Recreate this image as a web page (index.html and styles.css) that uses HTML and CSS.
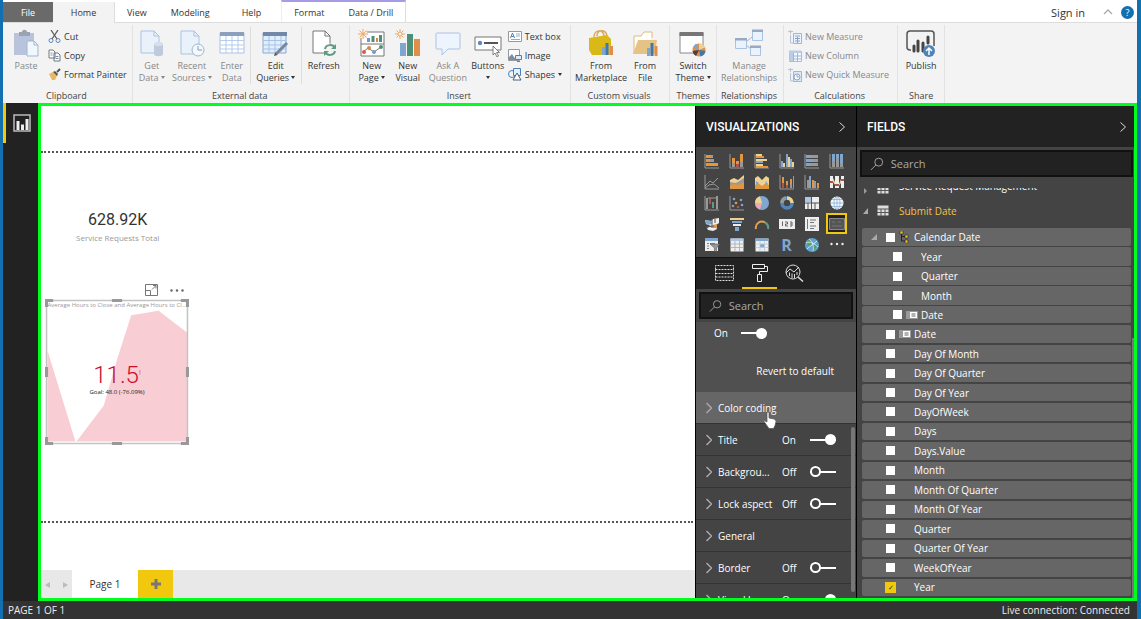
FILE: index.html
```html
<!DOCTYPE html>
<html lang="en">
<head>
    <meta charset="UTF-8">
    <meta name="viewport" content="width=device-width, initial-scale=1">
    <title>Service Requests - Power BI Desktop</title>
    <link rel="stylesheet" href="styles.css">
</head>
<body>
    <header class="tabs">
        <button class="tab tab-file">File</button>
        <button class="tab tab-home">Home</button>
        <button class="tab">View</button>
        <button class="tab">Modeling</button>
        <button class="tab tab-help">Help</button>
        <div class="tab-context">
            <button class="tab">Format</button>
            <button class="tab">Data / Drill</button>
        </div>
        <div class="account">
            <a href="#" class="signin">Sign in</a>
            <svg width="10" height="6" viewBox="0 0 10 6"><path d="M1 5L5 1L9 5" fill="none" stroke="#aaa" stroke-width="1.3"/></svg>
            <button class="help">?</button>
        </div>
    </header>

    <div class="ribbon">
        <section class="group">
            <div class="tools">
                <button class="big medium off">
                    <svg width="26" height="28" viewBox="0 0 26 28"><path d="M1 4h20v22H1z" fill="#b9c4dc"/><path d="M6 7V3h3c0-3 5-3 5 0h3v4z" fill="#9aa3b3"/><path d="M14 12h7l4 4v11H14z" fill="#f1f7fd" stroke="#9db7d4"/><path d="M21 12v4h4" fill="none" stroke="#9db7d4"/></svg>
                    <span>Paste</span>
                </button>
                <div class="smalls">
                    <button class="small">
                        <svg width="13" height="13" viewBox="0 0 13 13"><path d="M3 0L9 9M10 0L4 9" stroke="#555" stroke-width="1.2"/><circle cx="3" cy="10.500" r="2" fill="none" stroke="#5a86b8"/><circle cx="10" cy="10.500" r="2" fill="none" stroke="#5a86b8"/></svg>
                        Cut
                    </button>
                    <button class="small">
                        <svg width="13" height="13" viewBox="0 0 13 13"><path d="M1 1h4l2 2v6H1zM6 4h4l2 2v6H6z" fill="#fff" stroke="#777"/><path d="M2.500 4h2M2.500 6h2M7.500 7.500h3M7.500 9.500h3" stroke="#6a93bf"/></svg>
                        Copy
                    </button>
                    <button class="small">
                        <svg width="13" height="13" viewBox="0 0 13 13"><path d="M1 6l4-2 4 4-2 4-3 0z" fill="#eab765"/><path d="M5 4l2-1 3 3-1 2z" fill="#555"/><path d="M9 4l3-3" stroke="#555" stroke-width="2"/></svg>
                        Format Painter
                    </button>
                </div>
            </div>
            <h2>Clipboard</h2>
        </section>

        <section class="group">
            <div class="tools">
                <button class="big narrow off">
                    <svg width="24" height="28" viewBox="0 0 24 28"><path d="M1 2h13l5 5v17H1z" fill="#e9f1fb" stroke="#a9c3e4"/><path d="M14 2v5h5" fill="none" stroke="#a9c3e4"/><path d="M14 15v10c0 3 9 3 9 0V15z" fill="#bfcadd"/><ellipse cx="18.500" cy="15" rx="4.500" ry="2" fill="#d6deeb"/></svg>
                    <span>Get<br>Data <i class="caret"></i></span>
                </button>
                <button class="big medium off">
                    <svg width="26" height="28" viewBox="0 0 26 28"><path d="M2 2h13l5 5v18H2z" fill="#e9f1fb" stroke="#a9c3e4"/><path d="M15 2v5h5" fill="none" stroke="#a9c3e4"/><circle cx="19" cy="21" r="6" fill="#f4f8fd" stroke="#9fb4d0"/><path d="M19 17v4h4" fill="none" stroke="#8899b4"/></svg>
                    <span>Recent<br>Sources <i class="caret"></i></span>
                </button>
                <button class="big narrow off">
                    <svg width="26" height="28" viewBox="0 0 26 28"><path d="M1 4h24v20H1z" fill="#fff" stroke="#a9c3e4"/><path d="M1 3h24v4H1z" fill="#8d9fbe"/><path d="M1 11.500h24M1 16h24M1 20h24M7 7v17M13 7v17M19 7v17" stroke="#b5cdec"/></svg>
                    <span>Enter<br>Data</span>
                </button>
                <button class="big wide lined">
                    <svg width="28" height="28" viewBox="0 0 28 28"><path d="M1 4h23v20H1z" fill="#e3eefb" stroke="#8aa9cd"/><path d="M1 3h24v4H1z" fill="#7388a8"/><path d="M1 11.500h23M1 16h23M1 20h23M7 7v17M13 7v17M19 7v17" stroke="#a5c3e6"/><path d="M25 14L14 25" stroke="#76879f" stroke-width="3"/><path d="M12 27l1-3.500 2.500 2.500z" fill="#555"/></svg>
                    <span>Edit<br>Queries <i class="caret"></i></span>
                </button>
                <button class="big medium">
                    <svg width="26" height="28" viewBox="0 0 26 28"><path d="M2 2h12l5 5v17H2z" fill="#fff" stroke="#777"/><path d="M14 2v5h5" fill="none" stroke="#777"/><circle cx="19" cy="21" r="6.500" fill="#f3f3f3"/><path d="M14 20c1-5 8-5 10-1M24 22c-1 5-8 5-10 1" fill="none" stroke="#5d9c83" stroke-width="2"/><path d="M25 15v5h-5zM13 27v-5h5z" fill="#5d9c83"/></svg>
                    <span>Refresh</span>
                </button>
            </div>
            <h2>External data</h2>
        </section>

        <section class="group spaced">
            <div class="tools">
                <button class="big narrow">
                    <svg width="28" height="28" viewBox="0 0 28 28"><path d="M3 3h23v24H3zM3 15h23" fill="#fff" stroke="#777"/><path d="M9 9h3v4H9z" fill="#6f9bc4"/><path d="M13.500 7h3v6h-3z" fill="#4d9078"/><path d="M18 9h2v4h-2z" fill="#d98743"/><path d="M21 6h3v7h-3z" fill="#4d9078"/><path d="M5 23l5-4 6 4 7-5" fill="none" stroke="#777"/><circle cx="6" cy="23" r="2" fill="#d65d45"/><circle cx="11" cy="19" r="2" fill="#d98743"/><circle cx="16" cy="23" r="2" fill="#6f9bc4"/><circle cx="23" cy="18" r="2" fill="#4d9078"/><circle cx="5" cy="5" r="4.500" fill="#f3f3f3"/><path d="M5 0v10M0 5h10M1.500 1.500l7 7M8.500 1.500l-7 7" stroke="#f0a963"/></svg>
                    <span>New<br>Page <i class="caret"></i></span>
                </button>
                <button class="big narrow">
                    <svg width="26" height="28" viewBox="0 0 26 28"><path d="M5 14h6v13H5z" fill="#7ea6cf"/><path d="M12 5h6v22h-6z" fill="#4d9078"/><path d="M19 10h6v17h-6z" fill="#e08e48"/><path d="M5 0v10M0 5h10M1.500 1.500l7 7M8.500 1.500l-7 7" stroke="#f0a963"/><circle cx="5" cy="5" r="2" fill="#f3f3f3" stroke="#f0a963"/></svg>
                    <span>New<br>Visual</span>
                </button>
                <button class="big medium off">
                    <svg width="26" height="28" viewBox="0 0 26 28"><path d="M2 4h22q1 0 1 1v14q0 1-1 1H13l-6 6v-6H2q-1 0-1-1V5q0-1 1-1z" fill="#edf4fd" stroke="#a9c3e4"/></svg>
                    <span>Ask A<br>Question</span>
                </button>
                <button class="big narrow">
                    <svg width="28" height="28" viewBox="0 0 28 28"><path d="M1 8h26v13H1z" fill="#fff" stroke="#777"/><circle cx="6" cy="14" r="2.200" fill="#5a8bc0"/><path d="M10 14h14" stroke="#555" stroke-width="2"/><path d="M19 17v9l2-2 2 4 1.500-1-2-3.500h3z" fill="#fff" stroke="#666" stroke-width=".8"/></svg>
                    <span>Buttons<br><i class="caret"></i></span>
                </button>
                <div class="smalls">
                    <button class="small">
                        <svg width="14" height="13" viewBox="0 0 14 13"><path d="M.5 1.500h13v10H.5z" fill="#fff" stroke="#999"/><path d="M2.500 8l2-5 2 5M3.300 6.500h2.500" fill="none" stroke="#4a80bd"/><path d="M8 4h4M8 6h4M3 9.500h9" stroke="#89afd8"/></svg>
                        Text box
                    </button>
                    <button class="small">
                        <svg width="14" height="13" viewBox="0 0 14 13"><path d="M.5.5h11v11H.5z" fill="#fff" stroke="#999"/><path d="M1 11V8l3-3 4 6z" fill="#7c8fa8"/><path d="M7.500 6.500h6v4h-6zM9 12.500h3" fill="#dcecff" stroke="#4a80bd"/></svg>
                        Image
                    </button>
                    <button class="small">
                        <svg width="14" height="13" viewBox="0 0 14 13"><circle cx="4" cy="6" r="3.500" fill="none" stroke="#4a80bd"/><path d="M5.500.5h7v7h-7z" fill="#e5f0fc" stroke="#4a80bd"/><path d="M9 5l4 7H5z" fill="#fff" stroke="#47617f"/></svg>
                        Shapes <i class="caret"></i>
                    </button>
                </div>
            </div>
            <h2>Insert</h2>
        </section>

        <section class="group spaced">
            <div class="tools">
                <button class="big wide">
                    <svg width="26" height="28" viewBox="0 0 26 28"><path d="M6 8c0-8 10-8 10-1M9 7c0-7 9-7 10 0" fill="none" stroke="#d9a95a" stroke-width="1.500"/><path d="M1 9l18-3 4 4v16H4l-3-5z" fill="#d9b818"/><path d="M14 18h3v8h-3z" fill="#7ea6cf"/><path d="M17.500 14h3v12h-3z" fill="#3f78ad"/><path d="M22 17h3v9h-3z" fill="#e08e48"/></svg>
                    <span>From<br>Marketplace</span>
                </button>
                <button class="big narrow">
                    <svg width="26" height="28" viewBox="0 0 26 28"><path d="M2 24V7h7l3-4h8v6" fill="#fff" stroke="#e0b978"/><path d="M1 25l5-14h19l-2 14z" fill="#e5c385"/><path d="M15 19h3v8h-3z" fill="#7ea6cf"/><path d="M18.500 14h3v13h-3z" fill="#3f78ad"/><path d="M22.500 17h3v10h-3z" fill="#e08e48"/></svg>
                    <span>From<br>File</span>
                </button>
            </div>
            <h2>Custom visuals</h2>
        </section>

        <section class="group tight">
            <div class="tools">
                <button class="big medium">
                    <svg width="28" height="28" viewBox="0 0 28 28"><path d="M1 4h23v20H1z" fill="#fff" stroke="#888"/><path d="M.5 3h24v4H.5z" fill="#777"/><circle cx="20" cy="21" r="6.500" fill="#e08e48"/><path d="M20 21v-6.500a6.500 6.500 0 0 1 6 4z" fill="#eed292"/><path d="M20 21l6.500 1a6.500 6.500 0 0 1-5 5.500z" fill="#3f78ad"/><path d="M20 21l-3 6a6.500 6.500 0 0 1-3.500-5z" fill="#444"/><path d="M20 21l-6-3 3-3.500z" fill="#7ea6cf"/></svg>
                    <span>Switch<br>Theme <i class="caret"></i></span>
                </button>
            </div>
            <h2>Themes</h2>
        </section>

        <section class="group">
            <div class="tools">
                <button class="big full off">
                    <svg width="28" height="28" viewBox="0 0 28 28"><path d="M11 13l6-5M11 16l5 4" stroke="#aab4c4"/><path d="M.5 9.500h11v10H.5zM17.500 1.500h10v10h-10zM15.500 17.500h10v9h-10z" fill="#e9f2fd" stroke="#a9c3e4"/><path d="M0 9h12v2.500H0zM17 .5h11V3H17zM15 16.500h11V19H15z" fill="#98a9c4"/></svg>
                    <span>Manage<br>Relationships</span>
                </button>
            </div>
            <h2>Relationships</h2>
        </section>

        <section class="group spaced">
            <div class="tools">
                <div class="smalls">
                    <button class="small off">
                        <svg width="14" height="14" viewBox="0 0 14 14"><path d="M0 1.500h5M2.500 0v4M2.500 5v8h3" fill="none" stroke="#b6c4d8"/><path d="M5.500 3.500h8v10h-8z" fill="#e9f2fd" stroke="#9db7d8"/><path d="M7 6h5M7 8.500h5M7 11h5M9.500 7v6" stroke="#8ba4c6"/></svg>
                        New Measure
                    </button>
                    <button class="small off">
                        <svg width="14" height="14" viewBox="0 0 14 14"><path d="M1.500 2.500h12v10h-12z" fill="#f5f9ff" stroke="#a4bddc"/><path d="M1 1.500h12V4H1zM1.500 4h4v8h-4z" fill="#b9cde6"/><path d="M5.500 4v8M9.500 4v8M5 7h8M5 10h8" stroke="#9db7d8"/></svg>
                        New Column
                    </button>
                    <button class="small off">
                        <svg width="14" height="14" viewBox="0 0 14 14"><path d="M0 1.500h5M2.500 0v4M2.500 5v8h3" fill="none" stroke="#b6c4d8"/><path d="M5.500 3.500h8v10h-8z" fill="#dce8f7" stroke="#9db7d8"/><circle cx="9" cy="9" r="3" fill="#fff" stroke="#8ba4c6"/><path d="M9 7v2h2" fill="none" stroke="#8ba4c6"/></svg>
                        New Quick Measure
                    </button>
                </div>
            </div>
            <h2>Calculations</h2>
        </section>

        <section class="group tight">
            <div class="tools">
                <button class="big medium">
                    <svg width="30" height="28" viewBox="0 0 30 28"><path d="M5 21H4q-3 0-3-3V5q0-3 3-3h21q3 0 3 3v12" fill="none" stroke="#555" stroke-width="1.500"/><path d="M8 17v5M12 12v10M17 14v8M22 8v6" stroke="#444" stroke-width="3" stroke-linecap="round"/><circle cx="23" cy="22" r="6" fill="#4d83b6"/><path d="M23 26v-7M20 22l3-3 3 3" fill="none" stroke="#fff" stroke-width="1.500"/></svg>
                    <span>Publish</span>
                </button>
            </div>
            <h2>Share</h2>
        </section>
    </div>

    <main class="workspace">
        <nav class="rail">
            <button class="rail-item" aria-label="Report">
                <svg width="18" height="18" viewBox="0 0 18 18"><path d="M1 1h16v16H1z" fill="none" stroke="#bbb" stroke-width="1.500"/><path d="M3.500 7h3v9h-3zM8 10.500h3V16H8zM12.500 5h3v11h-3z" fill="#eee"/></svg>
            </button>
        </nav>

        <div class="frame">
            <div class="report">
                <div class="canvas">
                    <div class="page"></div>
                    <div class="card">
                        <strong>628.92K</strong>
                        <span>Service Requests Total</span>
                    </div>
                    <div class="kpi-tools">
                        <svg width="13" height="12" viewBox="0 0 13 12"><path d="M.5.500h12v11H.5zM.5 6.500h5v5M7 5.500l4-4M8 1.500h3v3" fill="none" stroke="#777"/></svg>
                        <svg width="14" height="3" viewBox="0 0 14 3"><circle cx="1.500" cy="1.500" r="1.200" fill="#666"/><circle cx="7" cy="1.500" r="1.200" fill="#666"/><circle cx="12.500" cy="1.500" r="1.200" fill="#666"/></svg>
                    </div>
                    <div class="kpi">
                        <svg class="kpi-area" viewBox="0 0 142 144"><path d="M2.500 51L30 140.500H2.500zM31 140.500L58 105L71 60L85 16L112 11.500L140 33v107.500z" fill="#f8cdd3"/></svg>
                        <p class="kpi-title">Average Hours to Close and Average Hours to Cl...</p>
                        <p class="kpi-value">11.5<sup>!</sup></p>
                        <p class="kpi-goal">Goal: 48.0 (-76.09%)</p>
                        <!-- resize handles -->
                        <svg class="kpi-handles" viewBox="0 0 142 144"><path d="M1.500 1.500h139v141H1.500z" fill="none" stroke="#c4c4c4" stroke-width="1.500"/><path d="M0 8V0h8v3H3v5zM134 0h8v8h-3V3h-5zM142 136v8h-8v-3h5v-5zM8 144H0v-8h3v5h5zM66 0h10v3H66zM66 141h10v3H66zM0 67h3v10H0zM139 67h3v10h-3z" fill="#999"/></svg>
                    </div>
                </div>
                <div class="pages">
                    <div class="pager">
                        <button aria-label="Previous page"><svg width="5" height="6" viewBox="0 0 5 6"><path d="M5 0v6L0 3z" fill="#bbb"/></svg></button>
                        <button aria-label="Next page"><svg width="5" height="6" viewBox="0 0 5 6"><path d="M0 0v6l5-3z" fill="#bbb"/></svg></button>
                    </div>
                    <button class="page-tab">Page 1</button>
                    <button class="page-add" aria-label="Add page"><svg width="10" height="10" viewBox="0 0 10 10"><path d="M3.500 0h3v3.500H10v3H6.500V10h-3V6.500H0v-3h3.500z" fill="#777"/></svg></button>
                </div>
            </div>

            <aside class="pane viz">
                <div class="pane-head">
                    <h1>VISUALIZATIONS</h1>
                    <svg width="6" height="10" viewBox="0 0 6 10"><path d="M.5.500L5.500 5L.5 9.500" fill="none" stroke="#ddd"/></svg>
                </div>
                <div class="gallery">
                    <button aria-label="Stacked bar"><svg viewBox="0 0 16 16"><path d="M1 1v14h14" class="axis"/><path d="M2 2h5v3H2zM2 6h4v3H2zM2 10h6v3H2z" class="o"/><path d="M7 2h2v3H7zM6 6h4v3H6z" class="g"/><path d="M8 10h6v3H8z" class="o"/></svg></button>
                    <button aria-label="Stacked column"><svg viewBox="0 0 16 16"><path d="M1 1v14h14" class="axis"/><path d="M3 5h3v5H3zM7 8h3v3H7zM11 1h3v8h-3z" class="o"/><path d="M3 10h3v4H3zM11 9h3v5h-3z" class="g"/><path d="M7 11h3v3H7z" class="r"/></svg></button>
                    <button aria-label="Clustered bar"><svg viewBox="0 0 16 16"><path d="M1 1v14h14" class="axis"/><path d="M2 1h6v2H2zM2 6h11v2H2zM2 11h7v2H2z" class="y"/><path d="M2 3h8v2H2zM2 13h12v2H2z" class="o"/><path d="M2 8h7v2H2z" class="b"/></svg></button>
                    <button aria-label="Clustered column"><svg viewBox="0 0 16 16"><path d="M1 1v14h14" class="axis"/><path d="M2 8h2v6H2zM7 1h2v13H7zM11 6h2v8h-2z" class="b"/><path d="M4 10h2v4H4zM9 4h2v10H9zM13 9h2v5h-2z" class="y"/></svg></button>
                    <button aria-label="100% stacked bar"><svg viewBox="0 0 16 16"><path d="M1 1v14h14" class="axis"/><path d="M2 2h5v3H2zM2 6h7v3H2zM2 10h4v3H2z" class="b"/><path d="M7 2h7v3H7zM9 6h5v3H9zM6 10h8v3H6z" class="g"/></svg></button>
                    <button aria-label="100% stacked column"><svg viewBox="0 0 16 16"><path d="M1 1v14h14" class="axis"/><path d="M3 1h3v7H3zM7 1h3v4H7zM11 1h3v9h-3z" class="b"/><path d="M3 8h3v6H3zM7 5h3v9H7zM11 10h3v4h-3z" class="g"/></svg></button>

                    <button aria-label="Line"><svg viewBox="0 0 16 16"><path d="M1 1v14h14M1 12l5-5 3 2 5-5M1 14l4-3 5-1 5 4" class="axis"/></svg></button>
                    <button aria-label="Area"><svg viewBox="0 0 16 16"><path d="M1 15V6l4-2 4 2 6-5v14z" class="y"/><path d="M1 15V8l5 1 3-1 6-4v11z" class="g"/><path d="M1 15v-4l5-1 4 1 5-3v7z" class="o"/></svg></button>
                    <button aria-label="Stacked area"><svg viewBox="0 0 16 16"><path d="M1 15V4l3-2 4 4 4-4 3 2v11z" class="y"/><path d="M1 15v-4l3-2 4 3 4-3 3 2v4z" class="o"/><path d="M2 7l3 2-3 2zM12 7l2 3-3 1z" class="b"/></svg></button>
                    <button aria-label="Line and stacked column"><svg viewBox="0 0 16 16"><path d="M1 1v14h14" class="axis"/><path d="M3 3h2v6H3zM7 7h2v5H7zM11 5h2v5h-2z" class="o"/><path d="M3 9h2v5H3zM7 11h2v3H7z" class="r"/><path d="M11 10h2v4h-2zM14 2h1v12h-1z" class="g"/></svg></button>
                    <button aria-label="Line and clustered column"><svg viewBox="0 0 16 16"><path d="M1 1v14h14" class="axis"/><path d="M3 6h2v8H3zM10 7h2v7h-2z" class="g"/><path d="M5 2h2v12H5z" class="b"/><path d="M8 6h2v8H8zM13 9h2v5h-2z" class="o"/></svg></button>
                    <button aria-label="Ribbon"><svg viewBox="0 0 16 16"><path d="M1 2h3v12H1zM6 2h4v12H6zM12 2h3v12h-3z" class="w"/><path d="M4 4l2 4v3L4 8zM10 10l2-5v4l-2 3z" class="y"/><path d="M1 7h3v2H1zM6 10h4v2H6zM12 5h3v2h-3z" class="r"/></svg></button>

                    <button aria-label="Waterfall"><svg viewBox="0 0 16 16"><path d="M1 1v14h14" class="axis"/><path d="M2 3h2v11H2zM12 1h2v13h-2z" class="g"/><path d="M5 3h2v6H5z" class="r"/><path d="M8 7h2v6H8z" class="t"/><path d="M4 3h8" class="axis"/></svg></button>
                    <button aria-label="Scatter"><svg viewBox="0 0 16 16"><path d="M1 1v14h14" class="axis"/><circle cx="5" cy="4" r="1.300" class="b"/><circle cx="12" cy="5" r="1.300" class="b"/><circle cx="7" cy="8" r="1.300" class="o"/><circle cx="4" cy="11" r="1.300" class="g"/><circle cx="9" cy="12" r="1.300" class="r"/><circle cx="13" cy="10" r="1.300" class="b"/></svg></button>
                    <button aria-label="Pie"><svg viewBox="0 0 16 16"><circle cx="8" cy="8" r="7" class="b"/><path d="M8 8L6 1.200A7 7 0 0 0 1 8z" class="y"/><path d="M8 8H1a7 7 0 0 0 5 6.500z" fill="#e9aab0"/></svg></button>
                    <button aria-label="Donut"><svg viewBox="0 0 16 16"><circle cx="8" cy="8" r="5" fill="none" stroke="#4e87bd" stroke-width="3.500"/><path d="M8 3a5 5 0 0 1 5 5" fill="none" stroke="#eed292" stroke-width="3.500"/><path d="M3 8a5 5 0 0 1 4-5" fill="none" stroke="#999" stroke-width="3.500"/></svg></button>
                    <button aria-label="Treemap"><svg viewBox="0 0 16 16"><path d="M1 2h14v12H1z" class="w"/><path d="M1 2h6v5H1z" fill="#a9c7e6"/><path d="M7.500 2v12M1 8h14M11 8v6M4 8v6" stroke="#555"/></svg></button>
                    <button aria-label="Map"><svg viewBox="0 0 16 16"><circle cx="8" cy="8" r="6.500" fill="#f2f8fd"/><path d="M8 1.500v13M1.500 8h13M3 4.500h10M3 11.500h10" stroke="#7ea6cf" stroke-width=".7"/><ellipse cx="8" cy="8" rx="3" ry="6.500" fill="none" stroke="#7ea6cf" stroke-width=".7"/></svg></button>

                    <button aria-label="Filled map"><svg viewBox="0 0 16 16"><path d="M1 4l6 1 2-2 6-1v5l-3 2 1 4-4 2-5-1-1-2 4-2-5-2z" class="w"/><path d="M1 4l6 1 1 3-5 1z" class="b"/><path d="M9 9l4-1v4l-4 0z" class="o"/><path d="M8 3v9M11 3v4M2 11l8-1" stroke="#555"/></svg></button>
                    <button aria-label="Funnel"><svg viewBox="0 0 16 16"><path d="M1 2h14v2H1z" class="y"/><path d="M3 5h10v2H3zM6 11h4v4H6z" class="b"/><path d="M4 8h8v2H4z" class="w"/></svg></button>
                    <button aria-label="Gauge"><svg viewBox="0 0 16 16"><path d="M2 13a6 6 0 0 1 9-6.500" fill="none" stroke="#e4a24e" stroke-width="2"/><path d="M11 6.500A6 6 0 0 1 14 13" fill="none" stroke="#5d9c83" stroke-width="2"/></svg></button>
                    <button aria-label="Card"><svg viewBox="0 0 16 16"><path d="M0 3h16v10H0z" class="w"/><path d="M3.500 5.500V10M6 6h2.500v2H6.500v2H9M11 6h2v4h-2M11 8h2" fill="none" stroke="#666"/></svg></button>
                    <button aria-label="Multi-row card"><svg viewBox="0 0 16 16"><path d="M1 1h14v14H1z" class="w"/><path d="M3.500 3v10M6 4h6M6 6.500h4M6 10h6M6 12.500h4" stroke="#777"/></svg></button>
                    <button class="picked" aria-label="KPI"><svg viewBox="0 0 16 16"><path d="M.5 2.500h15v11H.5z" fill="#555" stroke="#888"/><path d="M3 6h3M3 10h10M9 6h3" stroke="#777"/></svg></button>

                    <button aria-label="Slicer"><svg viewBox="0 0 16 16"><path d="M1 1h13v13H1z" class="w"/><path d="M1 1h13v3H1z" class="b"/><path d="M3 6.500h2M3 9h2M3 11.500h2M6 6.500h5" stroke="#888"/><path d="M6 7h10l-3.500 4v4l-2-1v-3z" fill="#999" stroke="#444" stroke-width=".5"/></svg></button>
                    <button aria-label="Table"><svg viewBox="0 0 16 16"><path d="M1.500 1.500h13v13h-13z" class="w"/><path d="M1.500 1.500h13v2.500h-13z" fill="#a9c7e6"/><path d="M1.500 7h13M1.500 10.500h13M6 4v10M10.500 4v10" stroke="#aaa" stroke-width=".8"/></svg></button>
                    <button aria-label="Matrix"><svg viewBox="0 0 16 16"><path d="M1.500 1.500h13v13h-13z" class="w"/><path d="M1.500 1.500h13v2.500h-13zM6 7h4.500v3.500H6z" fill="#7ea6cf"/><path d="M1.500 7h13M1.500 10.500h13M6 4v10M10.500 4v10" stroke="#b8c8da" stroke-width=".8"/></svg></button>
                    <button class="letter" aria-label="R script visual">R</button>
                    <button aria-label="ArcGIS map"><svg viewBox="0 0 16 16"><circle cx="8" cy="8" r="7" fill="#5da3cf"/><path d="M4 3l4 1-1 4-4 1zM9 8l4-1-1 4-3 2z" fill="#5d9c63"/><path d="M2 6c4-2 8 0 12 4M3 12c3-3 8-6 10-8M5 2c4 3 5 8 4 12" fill="none" stroke="#e4f0fb" stroke-width=".8"/></svg></button>
                    <button aria-label="More visuals"><svg viewBox="0 0 16 16"><circle cx="2.500" cy="7" r="1.200" class="w"/><circle cx="8" cy="7" r="1.200" class="w"/><circle cx="13.500" cy="7" r="1.200" class="w"/></svg></button>
                </div>
                <div class="modes">
                    <button aria-label="Fields"><svg width="19" height="17" viewBox="0 0 19 17"><path d="M.5 5.500h18v-4H.5zM.5 5.500v11h18v-11M.5 9.500h18M.5 13h18" fill="none" stroke="#ddd" stroke-dasharray="2 1"/></svg></button>
                    <button class="active" aria-label="Format"><svg width="18" height="18" viewBox="0 0 18 18"><path d="M1.500.500h12v4h-12zM13.500 2.500h3v5h-8v3M6.500 10.500h4v7h-4z" fill="none" stroke="#eee"/></svg></button>
                    <button aria-label="Analytics"><svg width="19" height="18" viewBox="0 0 19 18"><circle cx="8" cy="8" r="7" fill="none" stroke="#ddd"/><path d="M13 13l5 4.500" stroke="#ddd" stroke-width="1.500"/><path d="M1 9l4-4 4 3 5-5M4.500 12V8.500M7 14V9.500M9.500 14v-4M12 11V8" fill="none" stroke="#ddd"/></svg></button>
                </div>
                <label class="search">
                    <svg width="15" height="14" viewBox="0 0 15 14"><circle cx="9.500" cy="5" r="4.300" fill="none" stroke="#aaa"/><path d="M6.500 8L1 13.500" stroke="#aaa"/></svg>
                    <input type="text" placeholder="Search" aria-label="Search properties">
                </label>
                <div class="props">
                    <div class="prop-body">
                        <label class="prop-state">On <input type="checkbox" class="toggle" checked></label>
                        <button class="revert">Revert to default</button>
                    </div>
                    <div class="prop hover">
                        <svg width="6" height="12" viewBox="0 0 6 12"><path d="M.5 1L5.500 6L.5 11" fill="none" stroke="#aaa" stroke-width="1.500"/></svg>
                        <span>Color coding</span>
                        <svg class="pointer" width="14" height="18" viewBox="0 0 14 18"><path d="M4 1.500q1.500-1.500 2 .5v5l5 1q2 .5 2 2.500l-1 4-1.500 3H6l-5-7q0-1.500 3 .5z" fill="#fff" stroke="#555" stroke-width=".7"/></svg>
                    </div>
                    <div class="prop">
                        <svg width="6" height="12" viewBox="0 0 6 12"><path d="M.5 1L5.500 6L.5 11" fill="none" stroke="#aaa" stroke-width="1.500"/></svg>
                        <span>Title</span>
                        <label class="prop-state">On <input type="checkbox" class="toggle" checked></label>
                    </div>
                    <div class="prop">
                        <svg width="6" height="12" viewBox="0 0 6 12"><path d="M.5 1L5.500 6L.5 11" fill="none" stroke="#aaa" stroke-width="1.500"/></svg>
                        <span>Backgrou...</span>
                        <label class="prop-state">Off <input type="checkbox" class="toggle"></label>
                    </div>
                    <div class="prop">
                        <svg width="6" height="12" viewBox="0 0 6 12"><path d="M.5 1L5.500 6L.5 11" fill="none" stroke="#aaa" stroke-width="1.500"/></svg>
                        <span>Lock aspect</span>
                        <label class="prop-state">Off <input type="checkbox" class="toggle"></label>
                    </div>
                    <div class="prop">
                        <svg width="6" height="12" viewBox="0 0 6 12"><path d="M.5 1L5.500 6L.5 11" fill="none" stroke="#aaa" stroke-width="1.500"/></svg>
                        <span>General</span>
                    </div>
                    <div class="prop">
                        <svg width="6" height="12" viewBox="0 0 6 12"><path d="M.5 1L5.500 6L.5 11" fill="none" stroke="#aaa" stroke-width="1.500"/></svg>
                        <span>Border</span>
                        <label class="prop-state">Off <input type="checkbox" class="toggle"></label>
                    </div>
                    <div class="prop">
                        <svg width="6" height="12" viewBox="0 0 6 12"><path d="M.5 1L5.500 6L.5 11" fill="none" stroke="#aaa" stroke-width="1.500"/></svg>
                        <span>Visual he...</span>
                        <label class="prop-state">On <input type="checkbox" class="toggle" checked></label>
                    </div>
                    <div class="scrollbar"></div>
                </div>
            </aside>

            <aside class="pane fields">
                <div class="pane-head">
                    <h1>FIELDS</h1>
                    <svg width="6" height="10" viewBox="0 0 6 10"><path d="M.5.500L5.500 5L.5 9.500" fill="none" stroke="#ddd"/></svg>
                </div>
                <label class="search">
                    <svg width="15" height="14" viewBox="0 0 15 14"><circle cx="9.500" cy="5" r="4.300" fill="none" stroke="#aaa"/><path d="M6.500 8L1 13.500" stroke="#aaa"/></svg>
                    <input type="text" placeholder="Search" aria-label="Search fields">
                </label>
                <div class="table-row scrolled">
                    <svg width="5" height="6" viewBox="0 0 5 6"><path d="M1 0l3 3-3 3z" fill="#999"/></svg>
                    <svg width="12" height="11" viewBox="0 0 12 11"><path d="M.5.500h11v10H.5z" fill="#ddd"/><path d="M0 4h12M0 7.500h12M4 4v7M8 4v7" stroke="#555"/></svg>
                    <span>Service Request Management</span>
                </div>
                <div class="table-row open">
                    <svg width="5" height="6" viewBox="0 0 5 6"><path d="M5 0v6H0z" fill="#aaa"/></svg>
                    <svg width="12" height="11" viewBox="0 0 12 11"><path d="M.5.500h11v10H.5z" fill="#ddd"/><path d="M0 4h12M0 7.500h12M4 4v7M8 4v7" stroke="#555"/></svg>
                    <span>Submit Date</span>
                </div>
                <div class="list">
                    <label class="field joined">
                        <svg class="fold" width="6" height="6" viewBox="0 0 6 6"><path d="M6 0v6H0z" fill="#aaa"/></svg>
                        <input type="checkbox">
                        <svg class="kind" width="13" height="12" viewBox="0 0 13 12"><path d="M3.500 3v7h5M3.500 5.500h5" fill="none" stroke="#222"/><path d="M2 0h3v3H2zM7 4h3v3H7zM7 9h3v3H7z" fill="#f2c80f" stroke="#222" stroke-width=".6"/></svg>
                        Calendar Date
                    </label>
                    <label class="field joined level"><input type="checkbox"><i class="kind"></i>Year</label>
                    <label class="field joined level"><input type="checkbox"><i class="kind"></i>Quarter</label>
                    <label class="field joined level"><input type="checkbox"><i class="kind"></i>Month</label>
                    <label class="field level"><input type="checkbox"><svg class="kind" width="13" height="8" viewBox="0 0 13 8"><path d="M1 0h12v8H1z" fill="#999"/><path d="M5 1h7v6H5z" fill="#fff"/><path d="M6.500 3h4M6.500 5h4" stroke="#666"/></svg>Date</label>
                    <label class="field"><input type="checkbox"><svg class="kind" width="13" height="8" viewBox="0 0 13 8"><path d="M1 0h12v8H1z" fill="#999"/><path d="M5 1h7v6H5z" fill="#fff"/><path d="M6.500 3h4M6.500 5h4" stroke="#666"/></svg>Date</label>
                    <label class="field"><input type="checkbox"><i class="kind"></i>Day Of Month</label>
                    <label class="field"><input type="checkbox"><i class="kind"></i>Day Of Quarter</label>
                    <label class="field"><input type="checkbox"><i class="kind"></i>Day Of Year</label>
                    <label class="field"><input type="checkbox"><i class="kind"></i>DayOfWeek</label>
                    <label class="field"><input type="checkbox"><i class="kind"></i>Days</label>
                    <label class="field"><input type="checkbox"><i class="kind"></i>Days.Value</label>
                    <label class="field"><input type="checkbox"><i class="kind"></i>Month</label>
                    <label class="field"><input type="checkbox"><i class="kind"></i>Month Of Quarter</label>
                    <label class="field"><input type="checkbox"><i class="kind"></i>Month Of Year</label>
                    <label class="field"><input type="checkbox"><i class="kind"></i>Quarter</label>
                    <label class="field"><input type="checkbox"><i class="kind"></i>Quarter Of Year</label>
                    <label class="field"><input type="checkbox"><i class="kind"></i>WeekOfYear</label>
                    <label class="field"><input type="checkbox" checked><i class="kind"></i>Year</label>
                </div>
                <div class="scrollbar"></div>
            </aside>
        </div>
    </main>

    <footer class="status">
        <span>PAGE 1 OF 1</span>
        <span>Live connection: Connected</span>
    </footer>
</body>
</html>
```
FILE: styles.css
```css
*, *::before {
    box-sizing: border-box;
}
body {
    display: flex;
    flex-direction: column;
    height: 100vh;
    margin: 0;
    border-left: 3px solid #1270b0;
    border-right: 4px solid #1270b0;
    font-family: "Open Sans", "Noto Sans", sans-serif;
    font-size: 10px;
    color: #333;
    background: #fff;
    overflow: hidden;
}
button {
    padding: 0;
    border: 0;
    background: none;
    font: inherit;
    color: inherit;
}
h1, h2, p {
    margin: 0;
    font-weight: normal;
}

/* ribbon tabs */
.tabs {
    display: flex;
    height: 23px;
    border-bottom: 1px solid #ddd;
    font-size: 9px;
}
.tab {
    padding: 3px 12px 0;
}
.tab-file {
    width: 50px;
    margin-top: 2px;
    padding: 0;
    background: #6a6a6a;
    color: #fff;
}
.tab-home {
    width: 62px;
    margin: 2px 0 -1px;
    padding: 0;
    border-right: 1px solid #ddd;
    background: #f3f3f3;
}
.tab-help {
    padding: 3px 20px 0;
}
.tab-context {
    display: flex;
    border-top: 2px solid #a59be6;
    border-left: 1px solid #eee;
    border-right: 1px solid #ddd;
}
.tab-context .tab {
    padding-top: 1px;
}
.account {
    display: flex;
    align-items: center;
    margin-left: auto;
    padding: 2px 3px 0 0;
}
.account svg {
    margin: 0 8px 0 18px;
}
.signin {
    color: #333;
    font-size: 11px;
    text-decoration: none;
}
.help {
    width: 13px;
    height: 13px;
    border-radius: 50%;
    background: #1270b0;
    color: #fff;
    font-size: 9px;
    line-height: 13px;
}

/* ribbon */
.ribbon {
    display: flex;
    height: 80px;
    padding-top: 2px;
    background: #f3f3f3;
    font-size: 9px;
    line-height: 12px;
}
.group {
    display: flex;
    flex-direction: column;
    justify-content: space-between;
    padding: 2px 3px 1px 1px;
    border-right: 1px solid #e2e2e2;
}
.group.spaced {
    padding-left: 4px;
    padding-right: 6px;
}
.group.tight {
    padding-right: 1px;
}
.group h2 {
    font-size: 9px;
    line-height: 13px;
    text-align: center;
    color: #444;
}
.tools {
    display: flex;
}
.big {
    display: flex;
    flex-direction: column;
    align-items: center;
    gap: 3px;
    padding-top: 2px;
    white-space: nowrap;
}
.big span {
    min-height: 24px;
}
.narrow {
    width: 36px;
}
.medium {
    width: 44px;
}
.wide {
    width: 52px;
}
.full {
    width: 62px;
}
.lined {
    border-left: 1px solid #ddd;
    border-right: 1px solid #ddd;
}
.off {
    color: #888;
}
.smalls {
    display: flex;
    flex-direction: column;
    padding-right: 2px;
}
.spaced .big + .smalls {
    padding-left: 2px;
}
.small {
    display: flex;
    align-items: center;
    gap: 3px;
    height: 19px;
    white-space: nowrap;
}
.caret {
    display: inline-block;
    border: 2px solid transparent;
    border-top: 3px solid;
    border-bottom: 0;
    vertical-align: 2px;
}

/* workspace */
.workspace {
    display: flex;
    flex: 1;
    min-height: 0;
}
.rail {
    width: 35px;
    background: #222;
}
.rail-item {
    display: flex;
    align-items: center;
    justify-content: center;
    width: 100%;
    height: 40px;
    border-left: 3px solid #f2c80f;
}
.frame {
    display: flex;
    flex: 1;
    min-width: 0;
    border: 3px solid #00ff1e;
}
.report {
    display: flex;
    flex: 1;
    flex-direction: column;
    min-width: 0;
    background: #fff;
}
.canvas {
    position: relative;
    flex: 1;
    padding: 45px 2px 47px 0;
}
.page {
    height: 100%;
    border-top: 2px dotted #555;
    border-bottom: 2px dotted #555;
}
.card {
    position: absolute;
    left: 35px;
    top: 104px;
    text-align: center;
}
.card strong {
    display: block;
    font: 16px/20px Roboto, sans-serif;
}
.card span {
    display: block;
    font-size: 8px;
    line-height: 16px;
    color: #999;
}
.kpi-tools {
    position: absolute;
    left: 104px;
    top: 178px;
    display: flex;
    gap: 12px;
    align-items: center;
}
.kpi {
    position: absolute;
    left: 4px;
    top: 193px;
    width: 144px;
    height: 146px;
    text-align: center;
}
.kpi-area, .kpi-handles {
    position: absolute;
    left: 0;
    top: 0;
    width: 144px;
    height: 146px;
}
.kpi-title {
    position: relative;
    padding-top: 2px;
    white-space: nowrap;
    font-size: 6px;
    line-height: 8px;
    color: #999;
}
.kpi-value {
    position: relative;
    padding-top: 52px;
    font: 300 24px/28px Roboto, sans-serif;
    color: #c8102e;
}
.kpi-value sup {
    font-size: 8px;
    line-height: 8px;
    vertical-align: 8px;
}
.kpi-goal {
    position: relative;
    font-size: 6px;
    line-height: 6px;
    color: #222;
}
.pages {
    display: flex;
    height: 28px;
    background: #e8e8e8;
    color: #333;
}
.pager {
    display: flex;
    align-items: center;
    justify-content: space-between;
    width: 31px;
    padding: 0 4px;
}
.page-tab {
    width: 66px;
    background: #fff;
}
.page-add {
    display: flex;
    align-items: center;
    justify-content: center;
    width: 35px;
    background: #f2c80f;
}

/* side panes */
.pane {
    position: relative;
    display: flex;
    flex-direction: column;
    border-left: 1px solid #000;
    background: #444;
    color: #fff;
    overflow: hidden;
}
.viz {
    width: 161px;
}
.fields {
    width: 278px;
}
.pane-head {
    display: flex;
    flex: none;
    align-items: center;
    justify-content: space-between;
    height: 41px;
    padding: 0 11px 0 10px;
    background: #222;
}
.fields .pane-head {
    padding-right: 8px;
}
.pane-head h1 {
    font: 500 12px/16px Roboto, sans-serif;
    color: #fff;
}
.search {
    display: flex;
    flex: none;
    align-items: center;
    gap: 7px;
    height: 27px;
    margin: 3px;
    padding: 0 8px;
    border: 2px solid #111;
    background: #222;
}
.fields .search {
    margin-right: 1px;
}
.search input {
    width: 100%;
    min-width: 0;
    padding: 0;
    border: 0;
    background: none;
    font: inherit;
    font-size: 11px;
    color: #eee;
}
.search input::placeholder {
    color: #aaa;
}
.gallery {
    display: grid;
    grid-template-columns: repeat(6, 25px);
    grid-auto-rows: 21px;
    flex: none;
    padding: 3px 3px 2px;
}
.gallery button {
    display: flex;
    align-items: center;
    justify-content: center;
}
.gallery svg {
    flex: none;
    width: 16px;
    height: 16px;
}
.gallery .picked {
    border: 2px solid #f2c80f;
    margin: 0 2px;
    background: #222;
}
.gallery .letter {
    font: bold 16px/20px "Open Sans", sans-serif;
    color: #7ea6cf;
}
.axis {
    fill: none;
    stroke: #999;
}
.o { fill: #e4963f; }
.b { fill: #7ea6cf; }
.g { fill: #999; }
.y { fill: #eed292; }
.r { fill: #b0524d; }
.t { fill: #5d9c83; }
.w { fill: #eee; }
.modes {
    display: flex;
    flex: none;
    height: 32px;
    padding-left: 11px;
    border-top: 1px solid #111;
    background: #222;
}
.modes button {
    display: flex;
    align-items: center;
    justify-content: center;
    width: 35px;
    border-bottom: 2px solid transparent;
}
.modes .active {
    border-color: #f2c80f;
}
.props {
    position: relative;
    flex: 1;
    min-height: 0;
    overflow: hidden;
}
.prop-body {
    display: flex;
    flex-direction: column;
    height: 70px;
    padding: 2px 22px 14px 18px;
    background: #505050;
}
.prop-body .prop-state {
    justify-content: flex-start;
    gap: 13px;
}
.revert {
    align-self: flex-end;
    margin-top: auto;
}
.prop {
    position: relative;
    display: flex;
    align-items: center;
    height: 32px;
    padding: 0 20px 0 10px;
    border-bottom: 1px solid #333;
    white-space: nowrap;
}
.prop span {
    padding-left: 6px;
}
.prop.hover {
    background: #666;
}
.prop-state {
    display: flex;
    align-items: center;
    justify-content: space-between;
    width: 54px;
    height: 18px;
}
.prop .prop-state {
    margin-left: auto;
}
.toggle {
    display: flex;
    align-items: center;
    appearance: none;
    width: 26px;
    height: 12px;
    margin: 0;
    background: linear-gradient(#fff, #fff) center / 100% 2px no-repeat;
}
.toggle::before {
    content: "";
    width: 11px;
    height: 11px;
    border: 2px solid #fff;
    border-radius: 50%;
    background: #444;
}
.toggle:checked::before {
    margin-left: auto;
    background: #fff;
}
.pointer {
    position: absolute;
    left: 67px;
    top: 19px;
    z-index: 1;
}
.props .scrollbar {
    position: absolute;
    right: 1px;
    top: 105px;
    bottom: 6px;
    width: 4px;
    border-radius: 2px;
    background: #777;
}

/* fields list */
.table-row {
    display: flex;
    flex: none;
    align-items: center;
    height: 23px;
    padding-left: 6px;
}
.table-row svg + svg {
    margin-left: 9px;
}
.table-row span {
    margin-left: 10px;
}
/* the row is half hidden under the search box */
.scrolled {
    align-items: flex-end;
    height: 6px;
    margin-top: 8px;
    overflow: hidden;
}
.scrolled span {
    line-height: 16px;
}
.open {
    margin: 5px 0 6px;
    color: #f2c14e;
}
.list {
    display: grid;
    grid-auto-rows: 1fr;
    flex: 1;
    min-height: 0;
    padding: 0 3px 0 5px;
}
.field {
    display: flex;
    align-items: center;
    min-height: 0;
    padding-left: 24px;
    margin-bottom: 2px;
    border-radius: 2px;
    background: #666;
    line-height: 16px;
}
.field.joined {
    margin-bottom: 1px;
}
.field.level {
    padding-left: 31px;
}
.fold {
    margin: 0 9px 0 -15px;
}
.kind {
    width: 13px;
    margin: 0 3px;
}
.field input {
    appearance: none;
    width: 9px;
    height: 9px;
    margin: 0;
    background: #fff;
}
.field input:checked {
    display: flex;
    align-items: center;
    justify-content: center;
    width: 11px;
    height: 11px;
    margin: 0 -1px;
    background: #f2c80f;
}
.field input:checked::before {
    content: "✓";
    font-size: 7px;
    line-height: 7px;
    color: #333;
}
.fields .scrollbar {
    position: absolute;
    right: 0;
    top: 232px;
    bottom: 0;
    width: 2px;
    background: #777;
}

/* status bar */
.status {
    display: flex;
    align-items: center;
    justify-content: space-between;
    height: 18px;
    padding: 0 7px 0 5px;
    background: #333;
    font-size: 10px;
    color: #eee;
}
```
